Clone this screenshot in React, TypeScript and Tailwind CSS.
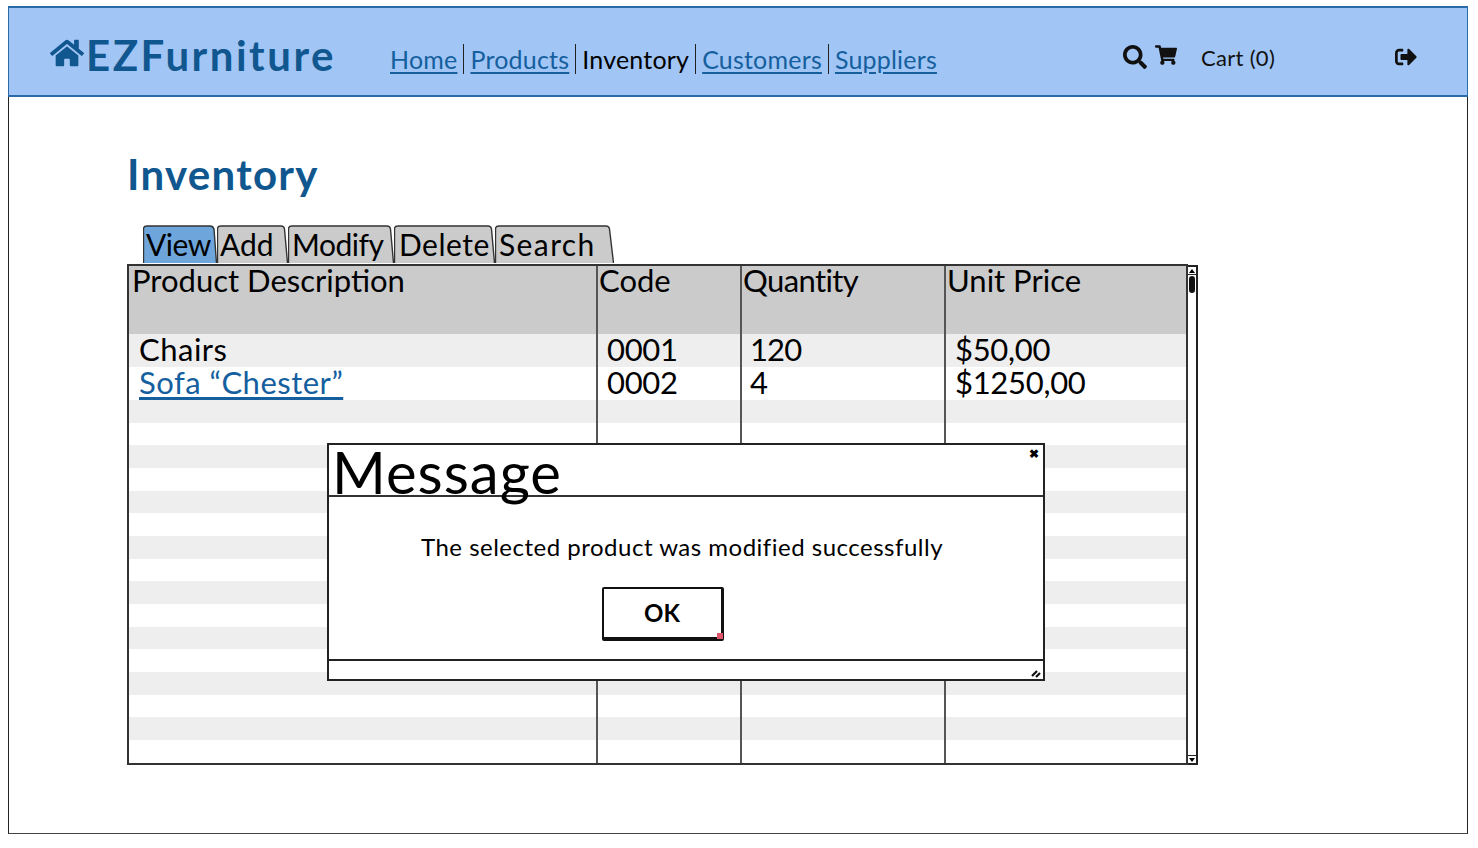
import { FaHome, FaSearch, FaShoppingCart, FaSignOutAlt } from 'react-icons/fa'

const tabs = [
  { label: 'View', size: 74, width: 'w-[74px]', text: 'left-[3px] tracking-[-0.5px]', path: 'M0.5 38V4Q0.5 1 4 1H67Q70 1 71 4L73.5 38', active: true },
  { label: 'Add', size: 71, width: 'w-[71px]', text: 'left-[3px] tracking-[0px]', path: 'M0.5 38L0.5 4Q0.5 1 4 1H64Q67 1 67.5 4L70.5 38' },
  { label: 'Modify', size: 106, width: 'w-[106px]', text: 'left-[4px] tracking-[-0.5px]', path: 'M0.5 38L0.5 4Q0.5 1 4 1H99Q102 1 102.5 4L105.5 38' },
  { label: 'Delete', size: 101, width: 'w-[101px]', text: 'left-[5px] tracking-[0.5px]', path: 'M0.5 38L0.5 4Q0.5 1 4 1H94Q97 1 97.5 4L100.5 38' },
  { label: 'Search', size: 119, width: 'w-[119px]', text: 'left-[4px] tracking-[1.4px]', path: 'M0.5 38L0.5 4Q0.5 1 4 1H111Q114 1 114.5 4L118.5 38' },
]

const navLinks = [
  { label: 'Home', active: false },
  { label: 'Products', active: false },
  { label: 'Inventory', active: true },
  { label: 'Customers', active: false },
  { label: 'Suppliers', active: false },
]

const rows = [
  { description: 'Chairs', code: '0001', quantity: '120', price: '$50,00', link: false },
  { description: 'Sofa “Chester”', code: '0002', quantity: '4', price: '$1250,00', link: true },
]

// filler stripes below the two data rows
const emptyRows = Array.from({ length: 16 }, (_, i) => i)

const App = () => {
  return (
    <div className="h-[848px] w-[1478px] bg-white pl-[8px] pr-[10px] pt-[6px] pb-[14px] font-['Lato',sans-serif] text-black">
      <div className="flex h-full flex-col border-x border-b border-x-[#222] border-b-[#444]">
        <header className="-mx-px flex h-[91px] shrink-0 items-center border-y-2 border-x border-[#2a6aa8] bg-[#a1c6f5] pl-[41px]">
          <div className="mt-[6px] flex w-[340px] items-center text-[#11578f]">
            <FaHome className="mr-[2px] mt-[-3px] h-[34px] w-[34px]" />
            <span className="text-[42px] font-bold leading-none tracking-[2.5px]">EZFurniture</span>
          </div>
          <nav className="mt-[14px] flex w-[733px] items-center text-[25px] leading-[30px] tracking-[0.2px]">
            {navLinks.map((link, i) => (
              <span key={link.label} className={i > 0 ? 'ml-[3px] border-l border-[#222] pl-[6px]' : ''}>
                {link.active ? (
                  <span className="mr-[3px] inline-block">{link.label}</span>
                ) : (
                  <a href="#" className="mr-[3px] inline-block text-[#155f9f] underline underline-offset-[3px]">
                    {link.label}
                  </a>
                )}
              </span>
            ))}
          </nav>
          <div className="mt-[10px] flex items-center text-[#111]">
            <FaSearch className="h-[24px] w-[24px]" />
            <FaShoppingCart className="ml-[8px] mt-[-4px] h-[20px] w-[22px]" />
            <span className="ml-[24px] mt-[2px] text-[22px] leading-none tracking-[0.3px]">Cart (0)</span>
            <FaSignOutAlt className="ml-[120px] mt-[1px] h-[22px] w-[22px]" />
          </div>
        </header>

        <main className="relative flex-1 pl-[118px] pt-[51px]">
          <h1 className="text-[42px] font-bold leading-[52px] tracking-[1.3px] text-[#11578f]">Inventory</h1>

          <div className="ml-[16px] mt-[25px] flex h-[39px]">
            {tabs.map((tab) => (
              <div key={tab.label} className={`relative h-[39px] ${tab.width}`}>
                <svg className="absolute inset-0 h-full w-full" viewBox={`0 0 ${tab.size} 39`}>
                  <path d={tab.path} fill={tab.active ? '#6ea6dc' : '#cbcbcb'} stroke="#333" strokeWidth="1.4" />
                </svg>
                <span className={`absolute top-[1px] text-[30px] leading-[36px] ${tab.text}`}>{tab.label}</span>
              </div>
            ))}
          </div>

          <div className="flex">
            <div className="h-[501px] w-[1061px] border-2 border-[#333] text-[31px]">
              <div className="grid h-[68px] grid-cols-[469px_144px_204px_242px] bg-[#cbcbcb] leading-[28px]">
                <div className="border-r-2 border-[#555] pl-[3px]">Product Description</div>
                <div className="border-r-2 border-[#555] pl-[1px]">Code</div>
                <div className="border-r-2 border-[#555] pl-[1px] tracking-[-0.6px]">Quantity</div>
                <div className="pl-[1px]">Unit Price</div>
              </div>
              {rows.map((row, i) => (
                <div key={row.code} className={`grid h-[33px] grid-cols-[469px_144px_204px_242px] leading-[30px] ${i % 2 === 0 ? 'bg-[#eeeeee]' : 'bg-white'}`}>
                  <div className="border-r-2 border-[#555] pl-[10px] tracking-[0.5px]">
                    {row.link ? <a href="#" className="text-[#155f9f] underline underline-offset-[3px]">{row.description}</a> : row.description}
                  </div>
                  <div className="border-r-2 border-[#555] pl-[9px] tracking-[-0.3px]">{row.code}</div>
                  <div className="border-r-2 border-[#555] pl-[8px] tracking-[-0.9px]">{row.quantity}</div>
                  <div className="pl-[9px] tracking-[-0.3px]">{row.price}</div>
                </div>
              ))}
              {emptyRows.map((i) => (
                <div key={i} className={`grid h-[22.67px] grid-cols-[469px_144px_204px_242px] ${i % 2 === 0 ? 'bg-[#eeeeee]' : 'bg-white'}`}>
                  <div className="border-r-2 border-[#555]" />
                  <div className="border-r-2 border-[#555]" />
                  <div className="border-r-2 border-[#555]" />
                  <div />
                </div>
              ))}
            </div>
            <div className="mt-[1px] flex h-[500px] w-[10px] flex-col border-2 border-l-0 border-[#222] bg-white">
              <div className="flex h-[8px] items-center justify-center border-b border-[#222]">
                <div className="h-0 w-0 border-x-[3px] border-b-[4px] border-x-transparent border-b-black" />
              </div>
              <div className="mx-auto mt-[1px] h-[17px] w-[6px] rounded-sm bg-[#111]" />
              <div className="flex-1" />
              <div className="flex h-[8px] items-center justify-center border-t border-[#222]">
                <div className="h-0 w-0 border-x-[3px] border-t-[4px] border-x-transparent border-t-black" />
              </div>
            </div>
          </div>

          <div className="absolute left-[318px] top-[346px] h-[238px] w-[718px] border-2 border-[#222] bg-white">
            <div className="relative h-[52px] border-b-2 border-[#333] pl-[3px] text-[58px] leading-[54px] tracking-[1px]">
              Message
              <span className="absolute right-[3px] top-[2px] text-[12px] font-bold leading-[14px]">✖</span>
            </div>
            <div className="flex h-[164px] flex-col items-center border-b-2 border-[#222]">
              <p className="ml-[-8px] mt-[35px] text-[24px] leading-[30px] tracking-[0.5px]">The selected product was modified successfully</p>
              <button className="relative ml-[-47px] mt-[25px] h-[54px] w-[122px] rounded-[2px] border-2 border-b-4 border-r-[3px] border-[#111] text-[24px] font-bold">
                OK
                <span className="absolute bottom-[-2px] right-[-2px] h-[6px] w-[6px] bg-[#e0556a]" />
              </button>
            </div>
            <svg className="absolute bottom-[1px] right-[1px] h-[10px] w-[11px]" viewBox="0 0 11 10">
              <path d="M1 8L6 3M5 9L9 5" stroke="#111" strokeWidth="2.2" />
            </svg>
          </div>
        </main>
      </div>
    </div>
  )
}

export default App
